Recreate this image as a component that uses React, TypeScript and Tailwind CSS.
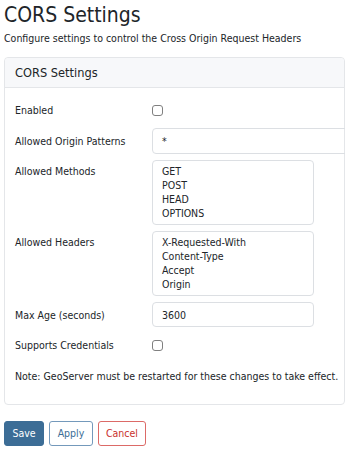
import React from "react";

const font = { fontFamily: "'DejaVu Sans Condensed', 'Liberation Sans', sans-serif" };

function Checkbox() {
  return <div className="w-[11px] h-[11px] rounded-[3px] border border-[#808080] bg-white" />;
}

export default function App() {
  return (
    <div className="w-[345px] h-[454px] overflow-hidden bg-white text-[#212529]" style={font}>
      <div className="pl-[4px]">
        <h1 className="text-[21px] leading-[30px] text-[#212529]">CORS Settings</h1>
        <p className="text-[10.5px] leading-[14px] mt-[1px]">Configure settings to control the Cross Origin Request Headers</p>
        <div className="mt-[12px] w-[341px] border border-[#e4e6e9] rounded-[4px]">
          <div className="h-[30px] bg-[#f7f8fa] border-b border-[#e4e6e9] flex items-center pl-[10px] text-[12.7px] rounded-t-[4px]">
            CORS Settings
          </div>
          <div className="pl-[10px] pt-[15px] pb-[21px] text-[10.5px] leading-[14px]">
            <div className="flex items-center h-[14px]">
              <div className="w-[137px]">Enabled</div>
              <Checkbox />
            </div>
            <div className="flex items-center mt-[11px]">
              <div className="w-[137px] shrink-0">Allowed Origin Patterns</div>
              <div className="w-[220px] h-[26px] shrink-0 border border-[#dcdfe3] rounded-[4px] flex items-center pl-[9px]">*</div>
            </div>
            <div className="flex mt-[6px]">
              <div className="w-[137px] shrink-0 pt-[4px]">Allowed Methods</div>
              <div className="w-[162px] h-[65px] border border-[#dcdfe3] rounded-[4px] pl-[9px] pt-[3px]">
                <div>GET</div>
                <div>POST</div>
                <div>HEAD</div>
                <div>OPTIONS</div>
              </div>
            </div>
            <div className="flex mt-[6px]">
              <div className="w-[137px] shrink-0 pt-[4px]">Allowed Headers</div>
              <div className="w-[162px] h-[65px] border border-[#dcdfe3] rounded-[4px] pl-[9px] pt-[3px]">
                <div>X-Requested-With</div>
                <div>Content-Type</div>
                <div>Accept</div>
                <div>Origin</div>
              </div>
            </div>
            <div className="flex items-center mt-[6px]">
              <div className="w-[137px] shrink-0">Max Age (seconds)</div>
              <div className="w-[162px] h-[25px] border border-[#dcdfe3] rounded-[4px] flex items-center pl-[9px]">3600</div>
            </div>
            <div className="flex items-center h-[14px] mt-[11px]">
              <div className="w-[137px] shrink-0">Supports Credentials</div>
              <Checkbox />
            </div>
            <p className="mt-[17px] whitespace-nowrap">Note: GeoServer must be restarted for these changes to take effect.</p>
          </div>
        </div>
        <div className="flex gap-[5px] mt-[16px] text-[10.5px]">
          <button className="h-[25px] w-[40px] rounded-[3px] bg-[#3c6d96] text-white border border-[#3c6d96]">Save</button>
          <button className="h-[25px] w-[44px] rounded-[3px] bg-white text-[#3c6d96] border border-[#7499bb]">Apply</button>
          <button className="h-[25px] w-[48px] rounded-[3px] bg-white text-[#c9302c] border border-[#dc6a67]">Cancel</button>
        </div>
      </div>
    </div>
  );
}
